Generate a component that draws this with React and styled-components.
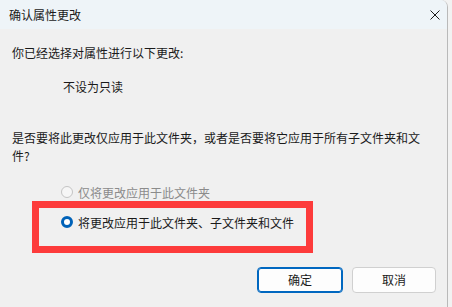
import React from 'react'
import styled, { createGlobalStyle } from 'styled-components'

const Global = createGlobalStyle`
  html, body {
    margin: 0;
    padding: 0;
    background: #f2f2f2;
  }
  body {
    font-family: "Microsoft YaHei UI", "Noto Sans CJK SC", sans-serif;
    font-size: 12px;
    color: #1a1a1a;
  }
`

const Window = styled.div`
  width: 447px;
  height: 307px;
  border-right: 1px solid #b9b9b9;
  border-top-right-radius: 7px;
  overflow: hidden;
  background: #f0f0f0;
  display: flex;
  flex-direction: column;
`

const TitleBar = styled.div`
  height: 29px;
  background: #eef4f8;
  display: flex;
  align-items: center;
  justify-content: space-between;
  padding: 0 2px 0 9px;
  flex-shrink: 0;
`

const Title = styled.div`
  line-height: 18px;
  color: #1a1a1a;
`

const Close = styled.div`
  width: 20px;
  height: 20px;
  display: flex;
  align-items: center;
  justify-content: center;
  svg {
    display: block;
  }
`

const Body = styled.div`
  flex: 1;
  padding: 15px 11px 14px 12px;
  display: flex;
  flex-direction: column;
`

const Line = styled.div`
  line-height: 18px;
  margin-top: ${p => p.$top || 0}px;
  padding-left: ${p => p.$indent || 0}px;
  color: #1a1a1a;
`

const Question = styled.div`
  line-height: 18px;
  margin-top: 33px;
  width: 412px;
  word-break: break-all;
`

const Option = styled.label`
  display: flex;
  align-items: center;
  gap: 5px;
  height: 18px;
  color: ${p => (p.$disabled ? '#8b8b8b' : '#1a1a1a')};
`

const Dot = styled.span`
  width: 12px;
  height: 12px;
  box-sizing: border-box;
  border-radius: 50%;
  flex-shrink: 0;
  border: ${p => (p.$checked ? '3.5px solid #0062b8' : '1px solid #c4c4c4')};
  background: ${p => (p.$checked ? '#ffffff' : '#f6f6f6')};
`

const Options = styled.div`
  margin-top: 18px;
  padding-left: 49px;
`

const Highlight = styled.div`
  width: 281px;
  height: 52px;
  box-sizing: border-box;
  border: 7px solid #fd3b3b;
  margin-left: 20px;
  padding: 5px 0 0 22px;
`

const Footer = styled.div`
  margin-top: 14px;
  display: flex;
  justify-content: flex-end;
  gap: 9px;
`

const Button = styled.button`
  width: ${p => p.$w}px;
  height: 26px;
  box-sizing: border-box;
  background: #fdfdfd;
  border-radius: 4px;
  border: ${p => (p.$primary ? '1px solid #0067c0' : '1px solid #d0d0d0')};
  box-shadow: ${p => (p.$primary ? 'inset 0 0 0 1px #0067c0' : 'none')};
  font-family: inherit;
  font-size: 12px;
  color: #1a1a1a;
  padding: 0;
  line-height: 18px;
`

export default function App() {
  return (
    <>
      <Global />
      <Window>
        <TitleBar>
          <Title>确认属性更改</Title>
          <Close>
            <svg width="10" height="10" viewBox="0 0 10 10">
              <path d="M0.5 0.5 L9.5 9.5 M9.5 0.5 L0.5 9.5" stroke="#1a1a1a" strokeWidth="1" fill="none" />
            </svg>
          </Close>
        </TitleBar>
        <Body>
          <Line>你已经选择对属性进行以下更改:</Line>
          <Line $top={16} $indent={51}>不设为只读</Line>
          <Question>是否要将此更改仅应用于此文件夹，或者是否要将它应用于所有子文件夹和文件?</Question>
          <Options>
            <Option $disabled>
              <Dot />
              仅将更改应用于此文件夹
            </Option>
          </Options>
          <Highlight>
            <Option>
              <Dot $checked />
              将更改应用于此文件夹、子文件夹和文件
            </Option>
          </Highlight>
          <Footer>
            <Button $primary $w={86}>确定</Button>
            <Button $w={84}>取消</Button>
          </Footer>
        </Body>
      </Window>
    </>
  )
}
